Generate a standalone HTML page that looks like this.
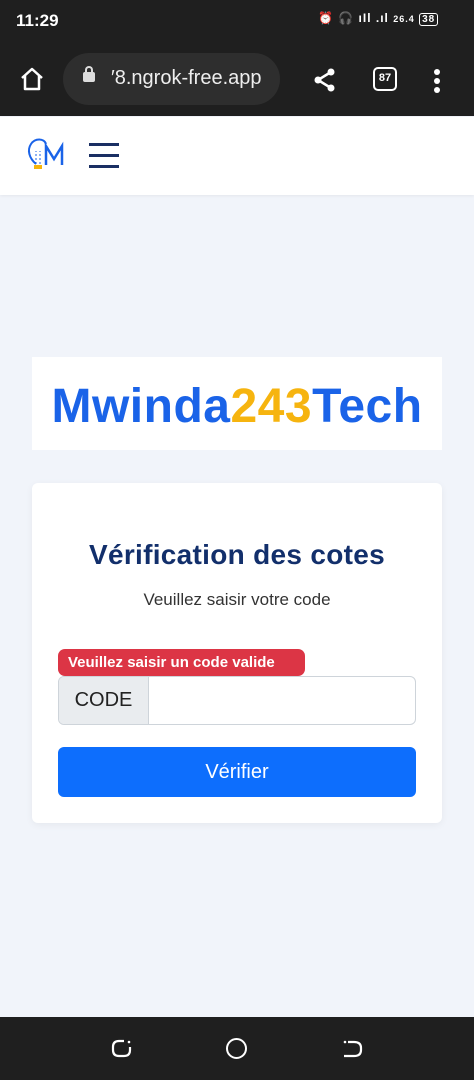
<!DOCTYPE html>
<html><head><meta charset="utf-8"><style>
*{margin:0;padding:0;box-sizing:border-box}
body{width:474px;height:1080px;background:#f1f4fa;font-family:"Liberation Sans",sans-serif;position:relative;overflow:hidden}
.top{position:absolute;left:0;top:0;width:474px;height:116px;background:#1f1f1f;color:#fff}
.hdr{position:absolute;left:0;top:117px;width:474px;height:78px;background:#fff;box-shadow:0 1px 3px rgba(0,0,0,.06)}
.logo{position:absolute;left:32px;top:357px;width:410px;height:93px;background:#fff;text-align:center;font-size:48px;font-weight:bold;color:#1a63e8;line-height:100px;letter-spacing:0.5px}
.card{position:absolute;left:32px;top:483px;width:410px;height:340px;background:#fff;border-radius:6px;box-shadow:0 2px 8px rgba(0,0,0,.05)}
.bot{position:absolute;left:0;top:1017px;width:474px;height:63px;background:#1f1f1f}
</style></head><body>
<div class="top">
 <div style="position:absolute;left:16px;top:11px;font-size:17px;font-weight:bold">11:29</div>
 <div style="position:absolute;left:318px;top:11px;font-size:12px;font-weight:bold;letter-spacing:1px">⏰ 🎧 ıIl .ıl <span style="font-size:9px">26.4</span> <span style="border:1.5px solid #fff;border-radius:3px;padding:0 2px;font-size:10px">38</span></div>
 <svg style="position:absolute;left:19px;top:66px" width="26" height="26" viewBox="0 0 26 26"><path d="M3 12 L13 3 L23 12 M6 10 V23 H20 V10" fill="none" stroke="#fff" stroke-width="2.5" stroke-linejoin="round"/></svg>
 <div style="position:absolute;left:63px;top:53px;width:217px;height:52px;border-radius:26px;background:#2e2e2e"></div>
 <div style="position:absolute;left:83px;top:72px;width:12px;height:10px;background:#ddd;border-radius:2px"></div>
 <div style="position:absolute;left:85px;top:66px;width:8px;height:8px;border:2px solid #ddd;border-radius:4px 4px 0 0;border-bottom:none"></div>
 <div style="position:absolute;left:111px;top:67px;font-size:20px;color:#eee">′8.ngrok-free.app</div>
 <svg style="position:absolute;left:313px;top:67px" width="24" height="26" viewBox="0 0 24 26"><circle cx="18" cy="5" r="3.5" fill="#fff"/><circle cx="5" cy="13" r="3.5" fill="#fff"/><circle cx="18" cy="21" r="3.5" fill="#fff"/><path d="M18 5 L5 13 L18 21" stroke="#fff" stroke-width="2.5" fill="none"/></svg>
 <div style="position:absolute;left:373px;top:67px;width:24px;height:24px;border:2.5px solid #fff;border-radius:5px;font-size:11px;font-weight:bold;text-align:center;line-height:19px">87</div>
 <div style="position:absolute;left:434px;top:69px;width:6px;height:6px;background:#fff;border-radius:3px;box-shadow:0 9px 0 #fff,0 18px 0 #fff"></div>
</div>
<div class="hdr">
 <svg style="position:absolute;left:25px;top:20px" width="40" height="36" viewBox="0 0 40 36"><path d="M11 27 C4 21 2 13 6 7 C10 1 19 1 21 7" fill="none" stroke="#1a63e8" stroke-width="2"/><path d="M11 27 V14 M15 27 V14" stroke="#1a63e8" stroke-width="1" stroke-dasharray="2 2"/><rect x="9" y="28" width="8" height="4" fill="#f5b50b"/><path d="M21 28 V9 L29 22 L37 9 V28" fill="none" stroke="#1a63e8" stroke-width="2.5"/></svg>
 <div style="position:absolute;left:89px;top:26px;width:30px;height:2.5px;background:#1a2f63;box-shadow:0 11px 0 #1a2f63,0 22px 0 #1a2f63"></div>
</div>
<div class="logo">Mwinda<span style="color:#f6b40f">243</span>Tech</div>
<div class="card">
 <div style="position:absolute;left:0;width:410px;top:56px;text-align:center;font-size:28px;font-weight:bold;color:#122f6b;letter-spacing:0.3px">Vérification des cotes</div>
 <div style="position:absolute;left:0;width:410px;top:107px;text-align:center;font-size:17px;color:#333">Veuillez saisir votre code</div>
 <div style="position:absolute;left:26px;top:166px;width:247px;height:27px;background:#dc3545;border-radius:7px;color:#fff;font-weight:bold;font-size:15px;line-height:27px;padding-left:10px">Veuillez saisir un code valide</div>
 <div style="position:absolute;left:26px;top:193px;width:358px;height:49px;border:1px solid #ced4da;border-radius:6px;overflow:hidden">
  <div style="width:90px;height:100%;background:#e9ecef;border-right:1px solid #ced4da;font-size:20px;color:#222;line-height:47px;text-align:center">CODE</div>
 </div>
 <div style="position:absolute;left:26px;top:264px;width:358px;height:50px;background:#0d6efd;border-radius:6px;color:#fff;font-size:20px;text-align:center;line-height:50px">Vérifier</div>
</div>
<div class="bot">
 <svg style="position:absolute;left:110px;top:20px" width="24" height="24" viewBox="0 0 24 24"><path d="M14 4 H9 Q3 4 3 10 V13 Q3 19 9 19 H14 Q20 19 20 13 V10" fill="none" stroke="#fff" stroke-width="2.2"/><circle cx="19" cy="5" r="1.3" fill="#fff"/></svg>
 <div style="position:absolute;left:226px;top:21px;width:21px;height:21px;border:2.2px solid #fff;border-radius:50%"></div>
 <svg style="position:absolute;left:342px;top:20px" width="24" height="24" viewBox="0 0 24 24"><path d="M6 5 H12 Q19 5 19 11 V13 Q19 19 12 19 H2" fill="none" stroke="#fff" stroke-width="2.2"/><circle cx="3" cy="5" r="1.3" fill="#fff"/></svg>
</div>
</body></html>
